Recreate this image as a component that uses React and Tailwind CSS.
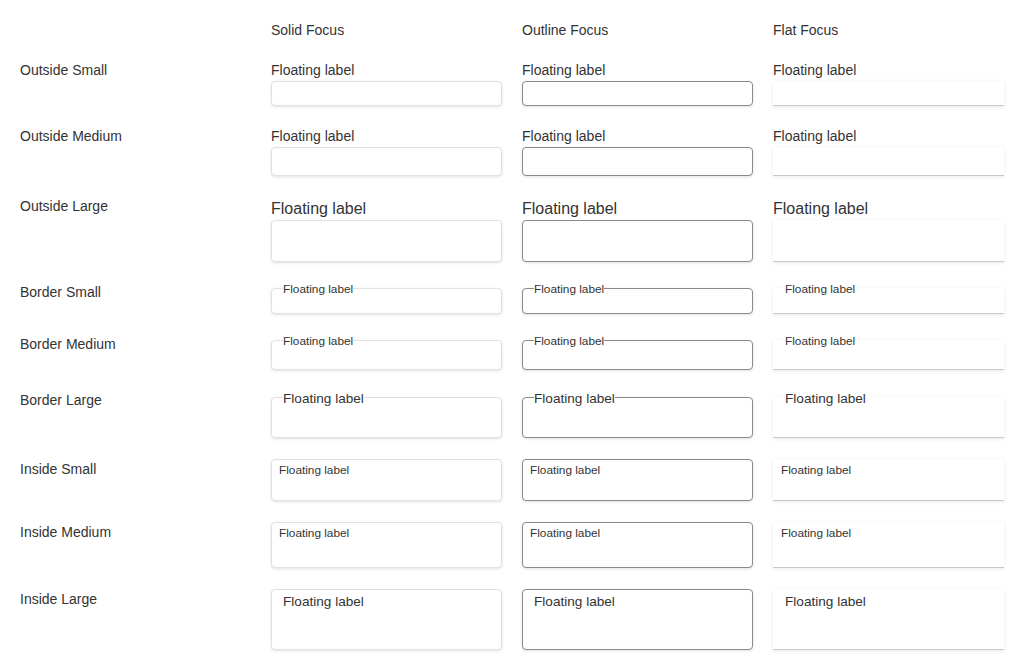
import React from "react";

const variants = {
  solid:
    "rounded-[4px] border border-[#e1e1e1] bg-white shadow-[0_1px_3px_rgba(0,0,0,0.12)]",
  outline:
    "rounded-[4px] border border-[#8a8a8a] bg-white shadow-[0_1px_3px_rgba(0,0,0,0.12)]",
  flat: "border-b border-[#c8c8c8] bg-white shadow-[0_1px_4px_rgba(0,0,0,0.09)]",
};

const columns = [
  { title: "Solid Focus", variant: "solid" },
  { title: "Outline Focus", variant: "outline" },
  { title: "Flat Focus", variant: "flat" },
];

const rows = [
  {
    name: "Outside Small",
    kind: "outside",
    label: "text-[14px] leading-[21px]",
    box: "h-[25px]",
  },
  {
    name: "Outside Medium",
    kind: "outside",
    label: "text-[14px] leading-[21px]",
    box: "h-[29px]",
  },
  {
    name: "Outside Large",
    kind: "outside",
    label: "pt-[3px] pb-[2px] text-[16px] leading-[19px]",
    box: "h-[42px]",
  },
  {
    name: "Border Small",
    kind: "border",
    pad: "pt-[6px]",
    label: "-top-[7px] left-[12px] text-[11.8px]",
    box: "h-[26px]",
  },
  {
    name: "Border Medium",
    kind: "border",
    pad: "pt-[6px]",
    label: "-top-[7px] left-[12px] text-[11.8px]",
    box: "h-[30px]",
  },
  {
    name: "Border Large",
    kind: "border",
    pad: "pt-[7px]",
    label: "-top-[8px] left-[12px] text-[13.6px]",
    box: "h-[41px]",
  },
  {
    name: "Inside Small",
    kind: "inside",
    pad: "pt-px",
    label: "top-[3px] left-[8px] text-[11.8px]",
    box: "h-[42px]",
  },
  {
    name: "Inside Medium",
    kind: "inside",
    pad: "pt-px",
    label: "top-[3px] left-[8px] text-[11.8px]",
    box: "h-[46px]",
  },
  {
    name: "Inside Large",
    kind: "inside",
    pad: "pt-px",
    label: "top-[3px] left-[12px] text-[13.6px]",
    box: "h-[61px]",
  },
];

function Field({ row, variant }) {
  const inputClass = `block w-full outline-none ${variants[variant]} ${row.box}`;

  if (row.kind === "outside") {
    return (
      <div>
        <div className={`text-[#333] ${row.label}`}>Floating label</div>
        <input className={inputClass} />
      </div>
    );
  }

  // border labels sit on the top edge, inside labels sit in the box
  const labelBg = row.kind === "border" ? "bg-white" : "bg-transparent";

  return (
    <div className={row.pad || ""}>
      <div className="relative">
        <input className={inputClass} />
        <span
          className={`absolute whitespace-nowrap leading-normal text-[#333] ${labelBg} ${row.label}`}
        >
          Floating label
        </span>
      </div>
    </div>
  );
}

export default function App() {
  return (
    <div
      className="min-h-[671px] bg-white text-[#333]"
      style={{ fontFamily: '"Liberation Sans", Arial, sans-serif' }}
    >
      <div className="grid grid-cols-4 items-start gap-5 px-5 pt-5">
        <div className="h-5" />
        {columns.map((col) => (
          <div key={col.title} className="text-sm leading-5">
            {col.title}
          </div>
        ))}

        {rows.map((row) => (
          <React.Fragment key={row.name}>
            <div className={`text-sm leading-5 ${row.kind === "inside" ? "pt-px" : ""}`}>
              {row.name}
            </div>
            {columns.map((col) => (
              <Field key={col.variant} row={row} variant={col.variant} />
            ))}
          </React.Fragment>
        ))}
      </div>
    </div>
  );
}
